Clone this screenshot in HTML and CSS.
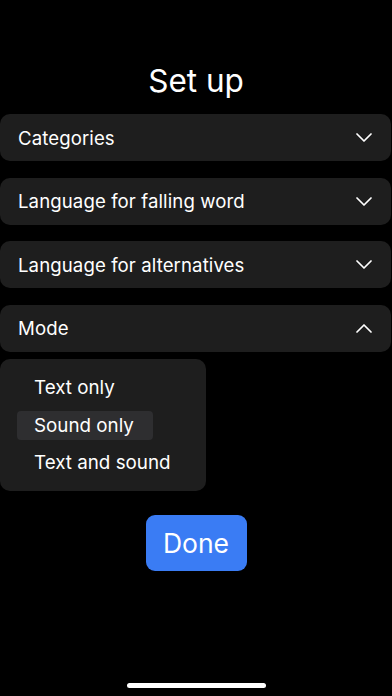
FILE: index.html
```html
<!DOCTYPE html>
<html lang="en">
<head>
<meta charset="utf-8">
<title>Set up</title>
<link rel="stylesheet" href="styles.css">
</head>
<body>
<div class="screen">
  <h1 class="title">Set up</h1>
  <div class="list">
    <div class="row"><span class="label">Categories</span>
      <svg class="chev" width="16" height="9" viewBox="0 0 16 9"><path d="M1 1 L8 8 L15 1" fill="none" stroke="#fff" stroke-width="1.7" stroke-linecap="round" stroke-linejoin="round"/></svg></div>
    <div class="row"><span class="label">Language for falling word</span>
      <svg class="chev" width="16" height="9" viewBox="0 0 16 9"><path d="M1 1 L8 8 L15 1" fill="none" stroke="#fff" stroke-width="1.7" stroke-linecap="round" stroke-linejoin="round"/></svg></div>
    <div class="row"><span class="label">Language for alternatives</span>
      <svg class="chev" width="16" height="9" viewBox="0 0 16 9"><path d="M1 1 L8 8 L15 1" fill="none" stroke="#fff" stroke-width="1.7" stroke-linecap="round" stroke-linejoin="round"/></svg></div>
    <div class="mode">
      <div class="row"><span class="label">Mode</span>
        <svg class="chev" width="16" height="9" viewBox="0 0 16 9"><path d="M1 8 L8 1 L15 8" fill="none" stroke="#fff" stroke-width="1.7" stroke-linecap="round" stroke-linejoin="round"/></svg></div>
      <div class="menu">
        <div class="item">Text only</div>
        <div class="item selected">Sound only</div>
        <div class="item">Text and sound</div>
      </div>
    </div>
  </div>
  <div class="actions"><button class="done">Done</button></div>
  <div class="home"></div>
</div>
</body>
</html>
```
FILE: styles.css
```css
html, body {
  margin: 0;
  padding: 0;
  background: #000;
}
body {
  font-family: Inter, "Noto Sans", "Liberation Sans", sans-serif;
  color: #fff;
}
.screen {
  width: 392px;
  height: 696px;
  display: flex;
  flex-direction: column;
  position: relative;
  overflow: hidden;
}
.title {
  margin: 0;
  padding-top: 62px;
  height: 52px;
  font-size: 31.5px;
  font-weight: 400;
  text-align: center;
  line-height: 38px;
  box-sizing: content-box;
}
.list {
  display: flex;
  flex-direction: column;
  gap: 16.5px;
}
.row {
  height: 47px;
  background: #1e1e1e;
  border-radius: 10px;
  display: flex;
  align-items: center;
  justify-content: space-between;
  padding: 0 19px 0 18px;
  margin: 0 1px 0 0;
}
.label {
  font-size: 18.6px;
  letter-spacing: 0.1px;
}
.chev {
  display: block;
}
.mode {
  display: flex;
  flex-direction: column;
  gap: 7px;
}
.menu {
  width: 206px;
  background: #1e1e1e;
  border-radius: 10px;
  padding: 14.5px 0 13.5px 17px;
  box-sizing: border-box;
  display: flex;
  flex-direction: column;
  gap: 8.5px;
}
.item {
  align-self: flex-start;
  font-size: 18.8px;
  height: 29px;
  line-height: 29px;
  padding: 0 17px;
  border-radius: 4px;
}
.item.selected {
  background: #2e2e30;
  width: 136px;
  box-sizing: border-box;
}
.actions {
  display: flex;
  justify-content: center;
  padding-top: 24px;
}
.done {
  width: 101px;
  height: 56px;
  border: none;
  border-radius: 9px;
  background: #3a7cf4;
  color: #fff;
  font-family: inherit;
  font-size: 26.5px;
  font-weight: 400;
  padding: 0;
}
.home {
  position: absolute;
  left: 127px;
  bottom: 8px;
  width: 139px;
  height: 5px;
  border-radius: 3px;
  background: #fff;
}
```
